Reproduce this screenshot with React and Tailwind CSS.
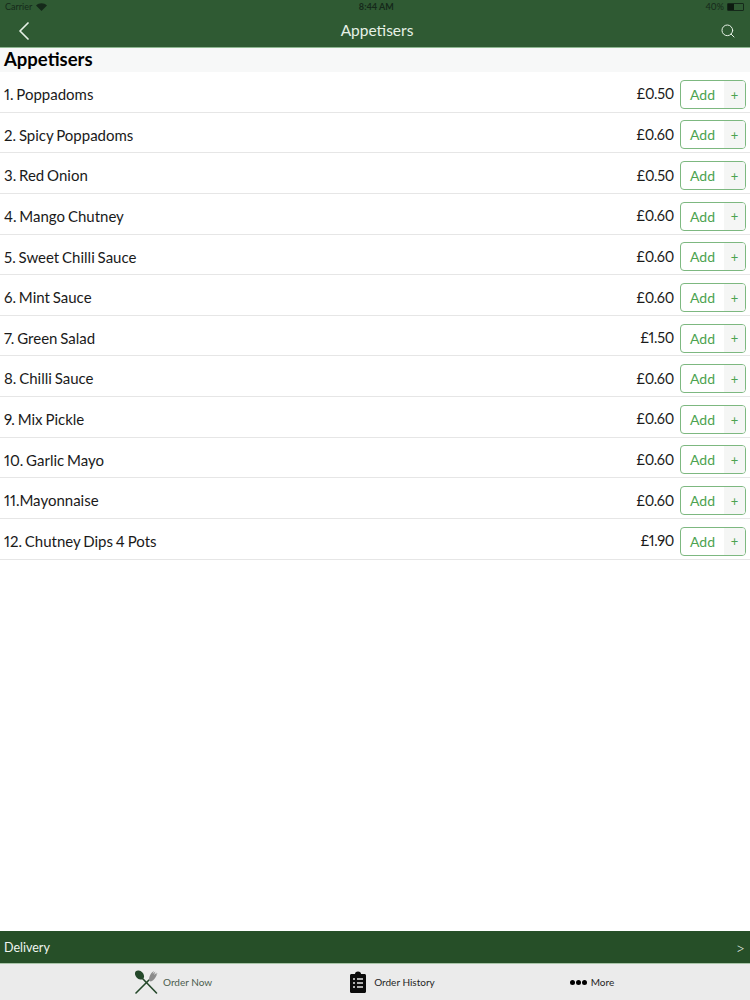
import React from "react";
import { ChevronLeft, Search } from "lucide-react";

const items = [
  { name: "1. Poppadoms", price: "£0.50" },
  { name: "2. Spicy Poppadoms", price: "£0.60" },
  { name: "3. Red Onion", price: "£0.50" },
  { name: "4. Mango Chutney", price: "£0.60" },
  { name: "5. Sweet Chilli Sauce", price: "£0.60" },
  { name: "6. Mint Sauce", price: "£0.60" },
  { name: "7. Green Salad", price: "£1.50" },
  { name: "8. Chilli Sauce", price: "£0.60" },
  { name: "9. Mix Pickle", price: "£0.60" },
  { name: "10. Garlic Mayo", price: "£0.60" },
  { name: "11.Mayonnaise", price: "£0.60" },
  { name: "12. Chutney Dips 4 Pots", price: "£1.90" },
];

const ForkKnife = () => (
  <svg width="24" height="24" viewBox="0 0 24 24">
    <path d="M21.5 23 L8 9" stroke="#24482a" strokeWidth="1.6" strokeLinecap="round" />
    <ellipse cx="4.5" cy="5" rx="3.8" ry="5.2" transform="rotate(-45 4.5 5)" fill="#24482a" />
    <path d="M1 23 L14 10" stroke="#24482a" strokeWidth="1.6" strokeLinecap="round" />
    <path d="M14 10.5 L15.5 11.5 C18 11 21 8 22.5 3 L20.5 5.5 L22 2.5 L19 5 L20.5 1.5 L17.5 4 L19 1 C16 2.5 14 6 14 10.5 Z" fill="#8c8c8c" />
  </svg>
);

const Clipboard = () => (
  <svg width="16" height="22" viewBox="0 0 16 22">
    <path d="M1.5 3 H5 C5 1.5 6 0.5 8 0.5 C10 0.5 11 1.5 11 3 H14.5 C15.4 3 16 3.6 16 4.5 V20.5 C16 21.4 15.4 22 14.5 22 H1.5 C0.6 22 0 21.4 0 20.5 V4.5 C0 3.6 0.6 3 1.5 3 Z" fill="#0c0c0c" />
    <path d="M3 8 H5 M7 8 H13 M3 12 H5 M7 12 H13 M3 16 H5 M7 16 H13" stroke="#e6e6e6" strokeWidth="1.4" />
  </svg>
);

const App = () => {
  return (
    <div className="w-[750px] h-[1000px] flex flex-col bg-white overflow-hidden font-['Lato','Liberation_Sans',sans-serif] proportional-nums">
      <header className="h-[48px] shrink-0 bg-[#2f5a33] border-b border-[#8fb892]">
        <div className="h-[14px] px-[5px] flex items-center justify-between text-[9px] text-[#15291a]">
          <div className="flex items-center gap-1">
            <span>Carrier</span>
            <svg width="11" height="8" viewBox="0 0 11 8">
              <path d="M0 2.5 C3 -0.5 8 -0.5 11 2.5 L5.5 8 Z" fill="#15291a" />
            </svg>
          </div>
          <span className="font-bold">8:44 AM</span>
          <div className="flex items-center gap-[3px] pr-[1px]">
            <span>40%</span>
            <div className="w-[17px] h-[8px] border border-[#15291a] rounded-[1px]">
              <div className="w-[6px] h-full bg-[#0d1a10]" />
            </div>
          </div>
        </div>
        <div className="h-[33px] flex items-center justify-between pl-[8px] pr-[14px]">
          <ChevronLeft size={32} strokeWidth={1.3} className="text-[#e6f1e6]" />
          <span className="text-[15.5px] text-[#e6f1e6] mr-[6px]">Appetisers</span>
          <Search size={16} strokeWidth={1.5} className="text-[#e6f1e6]" />
        </div>
      </header>

      <h2 className="h-[24px] shrink-0 bg-[#f7f8f8] pl-1 text-[18.5px] leading-[23px] font-bold text-black">Appetisers</h2>

      <ul>
        {items.map((item) => (
          <li key={item.name} className="h-[40.63px] flex items-center pl-1 pr-[4px] pt-[5px] border-b border-[#e6e6e6]">
            <span className="flex-1 text-[15px] text-[#1a1a1a] [word-spacing:-1px]">{item.name}</span>
            <span className="text-[14.5px] tracking-[-0.3px] text-[#1a1a1a] mr-[6px]">{item.price}</span>
            <div className="w-[66px] h-[29px] flex border border-[#7db880] rounded-[4px] overflow-hidden text-[#4ca350]">
              <span className="flex-1 flex items-center justify-center text-[14px]">Add</span>
              <span className="w-[21px] bg-[#f5f6f5] flex items-center justify-center text-[13px] pt-[2px]">+</span>
            </div>
          </li>
        ))}
      </ul>

      <div className="flex-1" />

      <div className="h-[33px] shrink-0 bg-[#264f28] border-b border-[#a8c4a8] flex items-center justify-between pl-1 pr-[5px] pt-[2px] text-[12.5px] text-[#f0f5f0]">
        <span>Delivery</span>
        <span className="text-[16px] font-light">&gt;</span>
      </div>

      <nav className="h-[36px] shrink-0 bg-[#ebebeb] flex items-center text-[10px]">
        <div className="flex items-center gap-[4px] ml-[135px] text-[#4b5d4e]">
          <ForkKnife />
          <span>Order Now</span>
        </div>
        <div className="flex items-center gap-[8px] ml-[138px] text-[#1f1f1f]">
          <Clipboard />
          <span>Order History</span>
        </div>
        <div className="flex items-center gap-[4px] ml-[135px] text-[#1f1f1f]">
          <div className="flex gap-[1px]">
            <span className="w-[5px] h-[5px] rounded-full bg-black" />
            <span className="w-[5px] h-[5px] rounded-full bg-black" />
            <span className="w-[5px] h-[5px] rounded-full bg-black" />
          </div>
          <span>More</span>
        </div>
      </nav>
    </div>
  );
};

export default App;
